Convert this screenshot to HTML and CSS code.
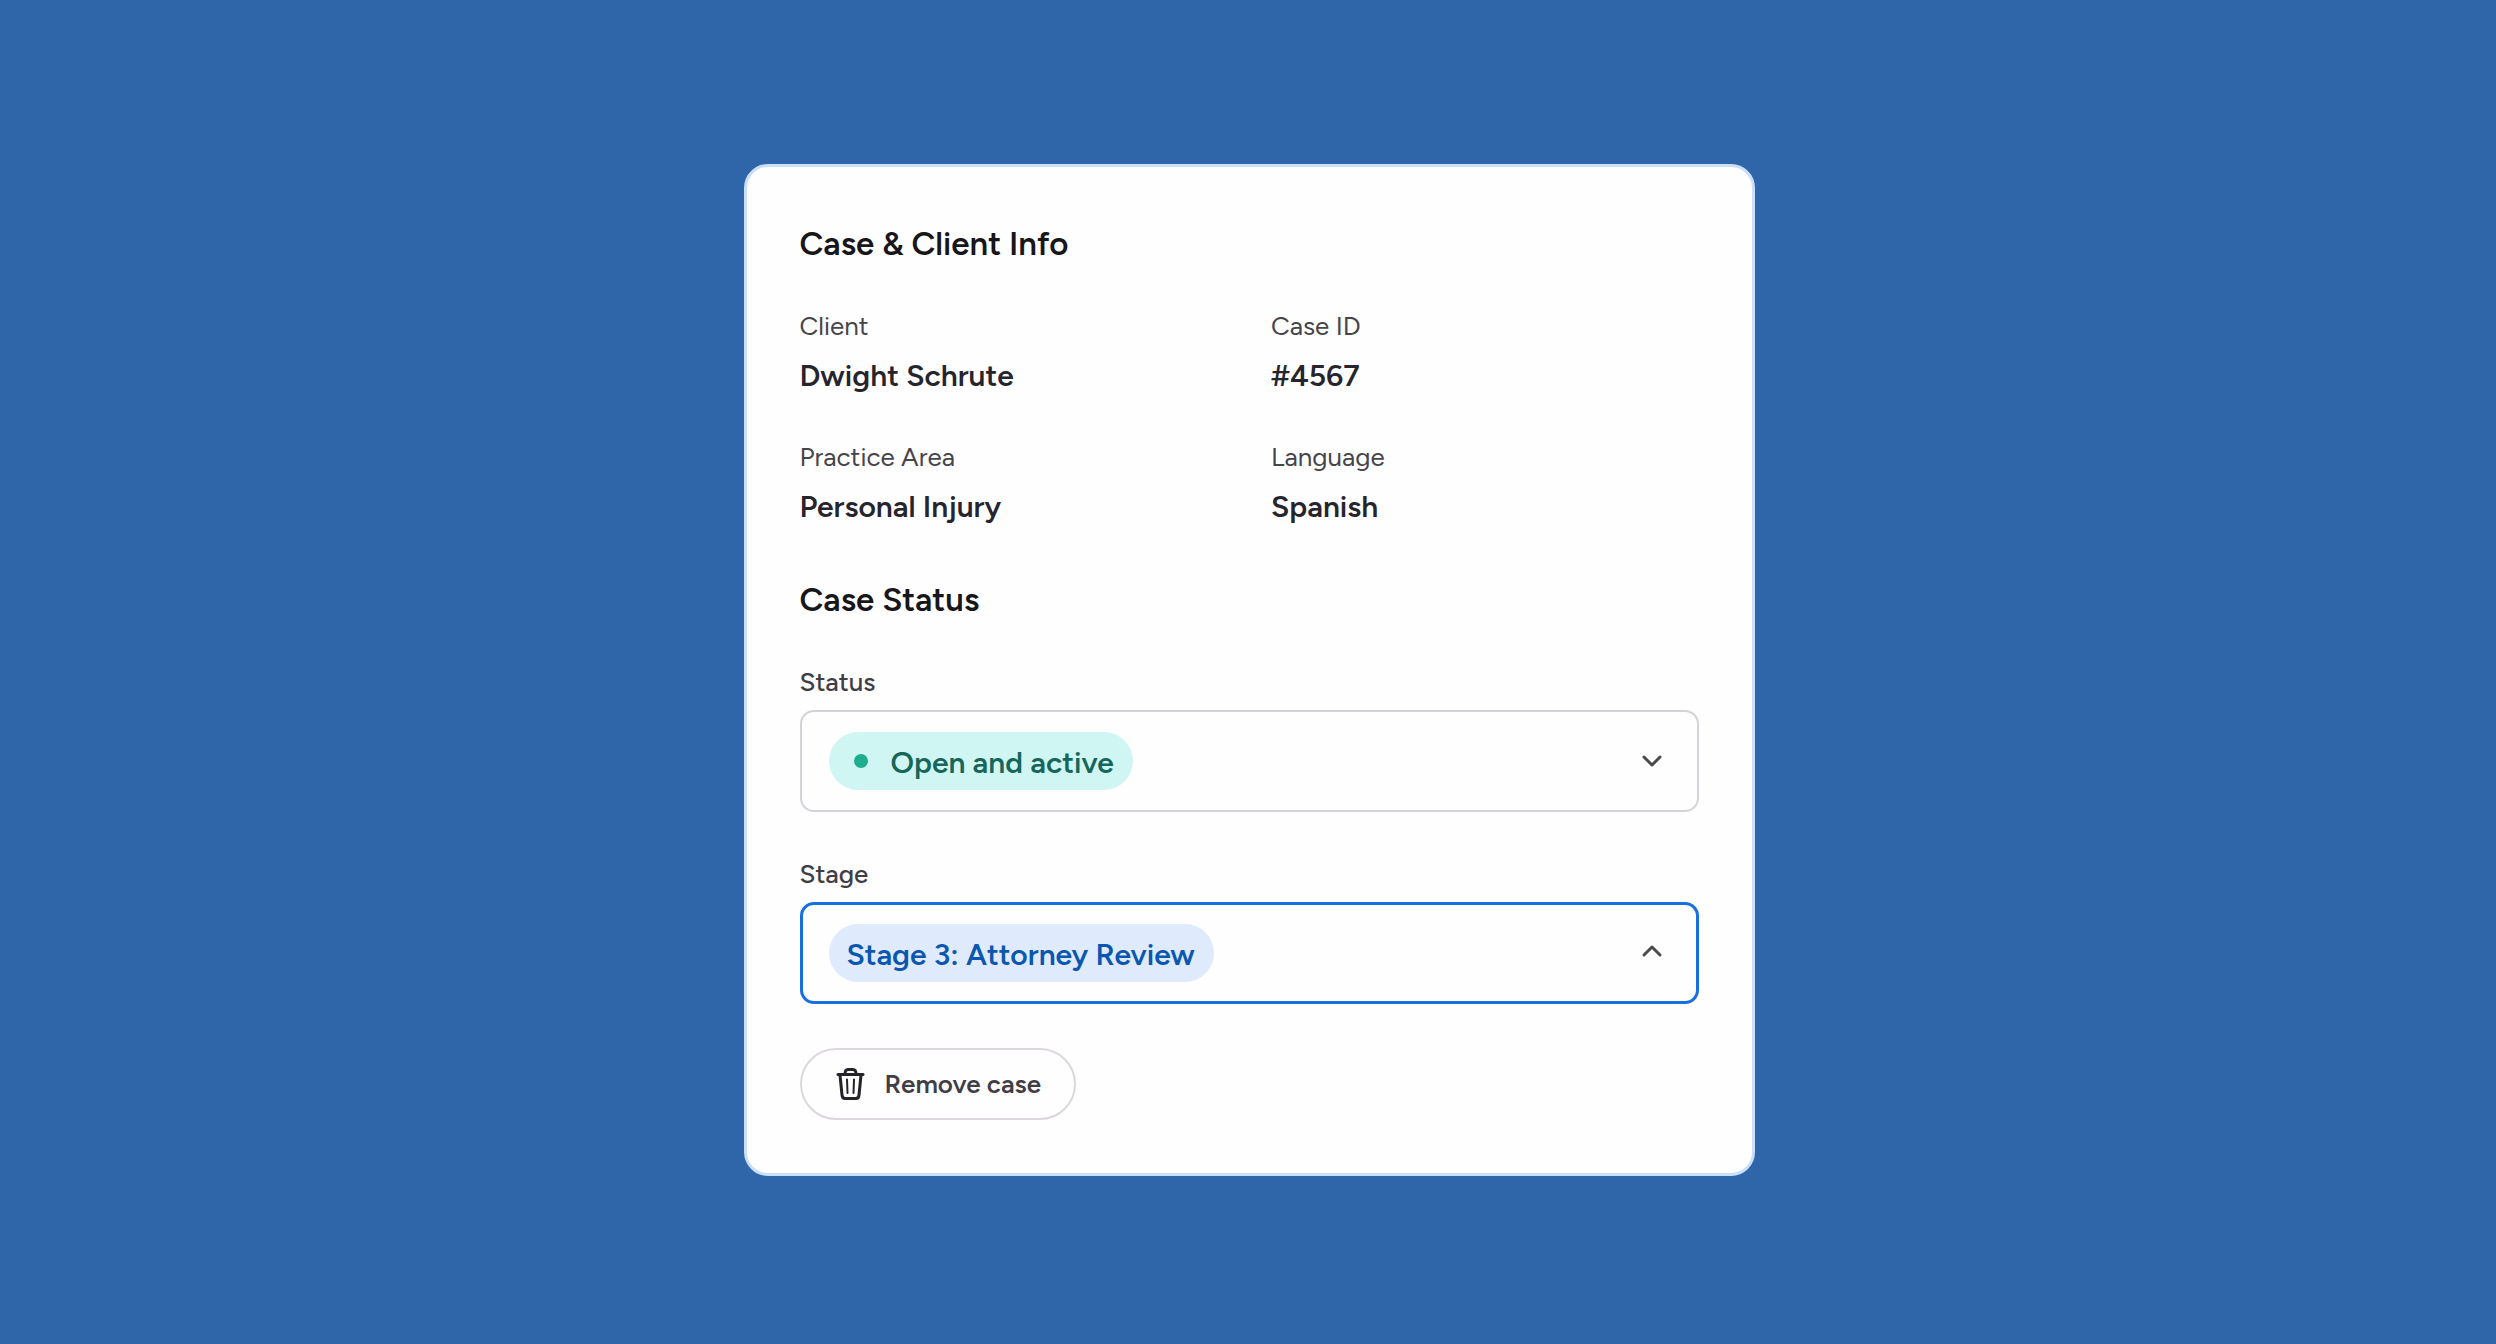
FILE: index.html
```html
<!DOCTYPE html>
<html lang="en">
<head>
<meta charset="utf-8">
<meta name="viewport" content="width=device-width, initial-scale=1">
<title>Case &amp; Client Info</title>
<link rel="stylesheet" href="styles.css">
</head>
<body>
	<main class="card">
		<section>
			<h2 class="title">Case &amp; Client Info</h2>
			<dl class="info">
				<div>
					<dt>Client</dt>
					<dd>Dwight Schrute</dd>
				</div>
				<div>
					<dt>Case ID</dt>
					<dd>#4567</dd>
				</div>
				<div>
					<dt>Practice Area</dt>
					<dd>Personal Injury</dd>
				</div>
				<div>
					<dt>Language</dt>
					<dd>Spanish</dd>
				</div>
			</dl>
		</section>

		<section>
			<h2 class="title">Case Status</h2>
			<form>
				<div class="fields">
					<div class="field">
						<label for="status">Status</label>
						<div class="box">
							<div class="chip chip-green">
								<span class="dot"></span>
								<select id="status"><option>Open and active</option></select>
							</div>
							<svg class="arrow" viewBox="0 0 24 24" aria-hidden="true"><path d="M4 8l8 8 8-8"/></svg>
						</div>
					</div>
					<div class="field">
						<label for="stage">Stage</label>
						<div class="box box-active">
							<div class="chip chip-blue">
								<select id="stage"><option>Stage 3: Attorney Review</option></select>
							</div>
							<svg class="arrow" viewBox="0 0 24 24" aria-hidden="true"><path d="M4 14l8-8 8 8"/></svg>
						</div>
					</div>
				</div>
				<button class="remove" type="button">
					<svg class="trash" viewBox="0 0 32 36" aria-hidden="true">
						<path d="M3 8.500H28"/>
						<path d="M10 8Q10 3.500 13 3.500H18Q21 3.500 21 8"/>
						<path d="M5 9L7 29Q7.300 32.500 10 32.500H21Q23.700 32.500 24 29L26 9"/>
						<path class="thin" d="M12 13.500L12.500 27M19 13.500L18.500 27"/>
					</svg>
					Remove case
				</button>
			</form>
		</section>
	</main>
</body>
</html>
```

FILE: styles.css
```css
*{box-sizing:border-box;}
body, h2, dl, dd{margin:0; padding:0;}

body {min-height:100vh; padding:0 0 5px 2px; display:flex; align-items:center; justify-content:center; background:#2f66aa; font-family:Figtree, Lato, sans-serif; color:#26242c;}

.card {width:100%; max-width:1011px; padding:53px; border:3px solid #cbdffb; border-radius:24px; background:#fefefe; display:flex; flex-direction:column; gap:49px;}
.title {margin-bottom:42px; font-size:33px; line-height:48px; font-weight:600; color:#17161a;}

.info {display:grid; grid-template-columns:1fr 1fr; gap:45px 44px;}
.info dt {margin-bottom:14px; font-size:26px; line-height:32px; color:#46454b;}
.info dd {font-size:30px; line-height:40px; font-weight:600;}

.fields {margin-bottom:44px; display:flex; flex-direction:column; gap:46px;}
.field {display:flex; flex-direction:column; gap:12px;}
.field label {font-size:26px; line-height:32px; font-weight:500; color:#3f3d45;}
.box {height:102px; padding:0 33px 0 27px; border:2px solid #d5d2d9; border-radius:14px; display:flex; align-items:center; justify-content:space-between;}
.box-active {border:3px solid #1a6fe0; padding:0 32px 0 26px;}

.chip {height:58px; padding:0 18px; border-radius:29px; display:flex; align-items:center; gap:23px;}
.chip select {appearance:none; margin:0; padding:4px 0 0; border:0; background:none; outline:0; font:inherit; font-size:30px; line-height:40px; font-weight:600; color:inherit; cursor:pointer;}
.chip-green {padding-left:25px; background:#cff6f3; color:#17665a;}
.chip-blue {background:#dfeafd; color:#0b57b0;}
.dot {width:14px; height:14px; border-radius:50%; background:#1dae90;}

.arrow {width:24px; height:24px; fill:none; stroke:#4b4a50; stroke-width:3; stroke-linecap:round; stroke-linejoin:round;}

.remove {height:72px; padding:0 33px; border:2px solid #dcd6dd; border-radius:36px; background:none; display:flex; align-items:center; gap:18px; font:inherit; font-size:26px; line-height:32px; font-weight:600; color:#403d46; cursor:pointer;}
.trash {width:32px; height:36px; fill:none; stroke:#24222b; stroke-width:3; stroke-linecap:round; stroke-linejoin:round;}
.trash .thin {stroke-width:2;}
```
